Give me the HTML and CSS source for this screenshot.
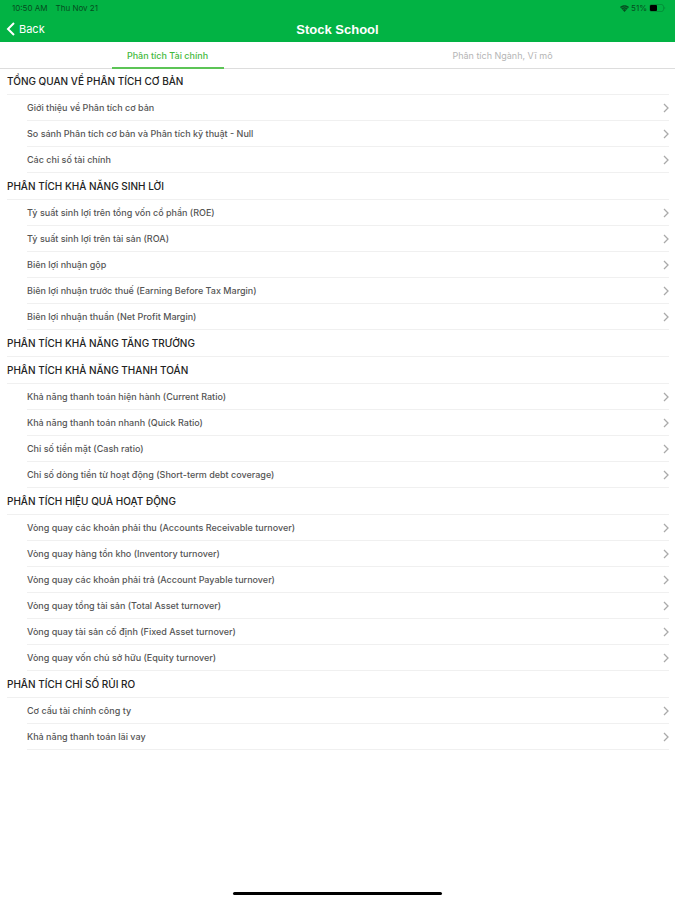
FILE: index.html
```html
<!DOCTYPE html>
<html lang="vi">
<head>
  <meta charset="UTF-8">
  <meta name="viewport" content="width=device-width, initial-scale=1.0">
  <title>Stock School</title>
  <link rel="stylesheet" href="styles.css">
</head>
<body>

<svg class="sprite" aria-hidden="true">
  <symbol id="chevron" viewBox="0 0 6 10"><path d="M1 1l4 4-4 4" fill="none" stroke="currentColor" stroke-width="1.3"/></symbol>
</svg>

<header class="header">
  <div class="status">
    <span>10:50 AM</span>
    <span>Thu Nov 21</span>
    <div class="status-right">
      <svg width="9" height="7" viewBox="0 0 9 7"><path d="M0 2C2.500-.4 6.500-.4 9 2L4.500 7z" fill="currentColor"/><path d="M1 3.200Q4.500.4 8 3.200M2.500 4.700Q4.500 3 6.500 4.700" fill="none" stroke="#02b344" stroke-width=".5"/></svg>
      <span>51%</span>
      <svg width="17" height="8" viewBox="0 0 17 8"><rect x=".5" y=".5" width="14" height="7" rx="2" fill="none" stroke="currentColor" stroke-width=".6" opacity=".5"/><rect x="1" y="1" width="7" height="6" rx="1" fill="#000"/><path d="M15.500 2.500q1.500 1.500 0 3z" fill="currentColor" opacity=".5"/></svg>
    </div>
  </div>
  <div class="navbar">
    <button type="button" class="back">
      <svg width="9" height="14" viewBox="0 0 9 14"><path d="M8 1L2 7l6 6" fill="none" stroke="currentColor" stroke-width="2"/></svg>
      Back
    </button>
    <h1>Stock School</h1>
  </div>
</header>

<nav class="tabs">
  <button type="button" class="tab active"><span>Phân tích Tài chính</span></button>
  <button type="button" class="tab"><span>Phân tích Ngành, Vĩ mô</span></button>
</nav>

<main class="list">
  <section class="group">
    <h2>TỔNG QUAN VỀ PHÂN TÍCH CƠ BẢN</h2>
    <a href="#">Giới thiệu về Phân tích cơ bản<svg class="arrow"><use href="#chevron"/></svg></a>
    <a href="#">So sánh Phân tích cơ bản và Phân tích kỹ thuật - Null<svg class="arrow"><use href="#chevron"/></svg></a>
    <a href="#">Các chỉ số tài chính<svg class="arrow"><use href="#chevron"/></svg></a>
  </section>
  <section class="group">
    <h2>PHÂN TÍCH KHẢ NĂNG SINH LỜI</h2>
    <a href="#">Tỷ suất sinh lợi trên tổng vốn cổ phần (ROE)<svg class="arrow"><use href="#chevron"/></svg></a>
    <a href="#">Tỷ suất sinh lợi trên tài sản (ROA)<svg class="arrow"><use href="#chevron"/></svg></a>
    <a href="#">Biên lợi nhuận gộp<svg class="arrow"><use href="#chevron"/></svg></a>
    <a href="#">Biên lợi nhuận trước thuế (Earning Before Tax Margin)<svg class="arrow"><use href="#chevron"/></svg></a>
    <a href="#">Biên lợi nhuận thuần (Net Profit Margin)<svg class="arrow"><use href="#chevron"/></svg></a>
  </section>
  <section class="group">
    <h2>PHÂN TÍCH KHẢ NĂNG TĂNG TRƯỞNG</h2>
  </section>
  <section class="group">
    <h2>PHÂN TÍCH KHẢ NĂNG THANH TOÁN</h2>
    <a href="#">Khả năng thanh toán hiện hành (Current Ratio)<svg class="arrow"><use href="#chevron"/></svg></a>
    <a href="#">Khả năng thanh toán nhanh (Quick Ratio)<svg class="arrow"><use href="#chevron"/></svg></a>
    <a href="#">Chỉ số tiền mặt (Cash ratio)<svg class="arrow"><use href="#chevron"/></svg></a>
    <a href="#">Chỉ số dòng tiền từ hoạt động (Short-term debt coverage)<svg class="arrow"><use href="#chevron"/></svg></a>
  </section>
  <section class="group">
    <h2>PHÂN TÍCH HIỆU QUẢ HOẠT ĐỘNG</h2>
    <a href="#">Vòng quay các khoản phải thu (Accounts Receivable turnover)<svg class="arrow"><use href="#chevron"/></svg></a>
    <a href="#">Vòng quay hàng tồn kho (Inventory turnover)<svg class="arrow"><use href="#chevron"/></svg></a>
    <a href="#">Vòng quay các khoản phải trả (Account Payable turnover)<svg class="arrow"><use href="#chevron"/></svg></a>
    <a href="#">Vòng quay tổng tài sản (Total Asset turnover)<svg class="arrow"><use href="#chevron"/></svg></a>
    <a href="#">Vòng quay tài sản cố định (Fixed Asset turnover)<svg class="arrow"><use href="#chevron"/></svg></a>
    <a href="#">Vòng quay vốn chủ sở hữu (Equity turnover)<svg class="arrow"><use href="#chevron"/></svg></a>
  </section>
  <section class="group">
    <h2>PHÂN TÍCH CHỈ SỐ RỦI RO</h2>
    <a href="#">Cơ cấu tài chính công ty<svg class="arrow"><use href="#chevron"/></svg></a>
    <a href="#">Khả năng thanh toán lãi vay<svg class="arrow"><use href="#chevron"/></svg></a>
  </section>
</main>

<div class="home-bar"></div>

</body>
</html>
```
FILE: styles.css
```css
* {
  box-sizing: border-box;
}

body {
  margin: 0;
  min-height: 100vh;
  display: flex;
  flex-direction: column;
  background-color: #fff;
  font-family: Inter, "Liberation Sans", sans-serif;
  font-size: 9px;
  color: #333;
}

button {
  border: none;
  padding: 0;
  background: none;
  font-family: inherit;
  cursor: pointer;
}

.sprite {
  display: none;
}

.header {
  background-color: #02b344;
  color: #fff;
}

.status {
  display: flex;
  align-items: center;
  gap: 8px;
  height: 16px;
  padding: 0 9px 0 12px;
  font-size: 8px;
  color: #064d20;
}

.status-right {
  display: flex;
  align-items: center;
  gap: 2px;
  margin-left: auto;
}

.navbar {
  display: grid;
  grid-template-columns: 1fr auto 1fr;
  align-items: center;
  height: 26px;
  padding: 0 6px;
}

.navbar h1 {
  margin: 0;
  font-family: "Liberation Sans", Arial, sans-serif;
  font-size: 13px;
  font-weight: bold;
}

.back {
  display: flex;
  align-items: center;
  gap: 4px;
  color: #fff;
  font-size: 11px;
}

.tabs {
  display: flex;
  height: 27px;
  padding-right: 5px;
  border-bottom: 1px solid #ddd;
}

.tab {
  flex: 1;
  display: flex;
  justify-content: center;
  font-size: 9px;
  color: #b5b5b5;
}

.tab span {
  min-width: 112px;
  height: 27px;
  line-height: 27px;
}

.tab.active span {
  font-weight: 500;
  color: #43b93c;
  border-bottom: 2px solid #5cc456;
}

.list {
  padding: 0 6px 0 7px;
}

.group {
  padding-bottom: 1px;
}

.group h2,
.group a {
  display: flex;
  align-items: center;
  height: 26px;
  margin: 0;
  border-bottom: 1px solid #f0f0f0;
}

.group h2 {
  padding-bottom: 2px;
  font-size: 10px;
  font-weight: 500;
  color: #222;
}

.group a {
  margin-left: 20px;
  font-weight: 500;
  color: #555;
  text-decoration: none;
}

.arrow {
  width: 6px;
  height: 10px;
  margin-left: auto;
  color: #aaa;
}

.home-bar {
  width: 31%;
  height: 3px;
  margin: auto auto 5px;
  border-radius: 2px;
  background-color: #000;
}
```
